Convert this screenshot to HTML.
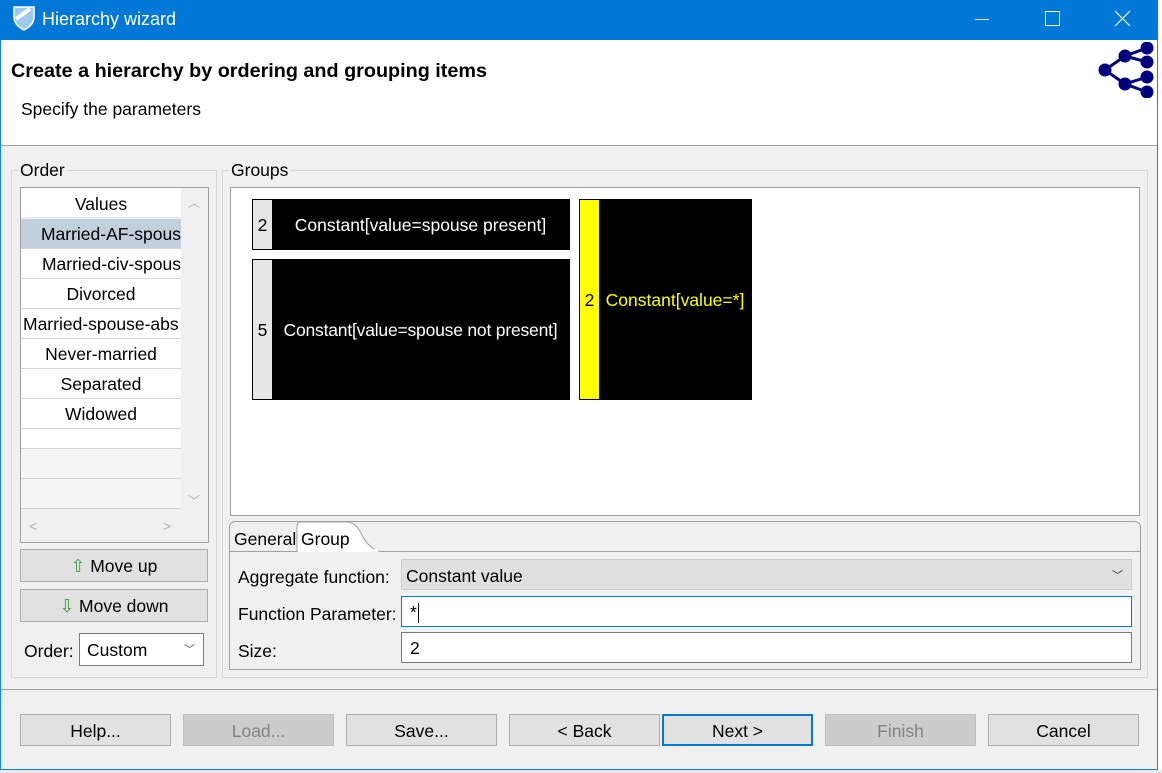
<!DOCTYPE html>
<html><head><style>
*{margin:0;padding:0;box-sizing:border-box}
body{width:1162px;height:773px;background:#f0f0f0;font-family:"Liberation Sans","DejaVu Sans",sans-serif;font-size:17.5px;color:#000;position:relative;overflow:hidden}
.a{position:absolute}
.btn{position:absolute;top:714px;width:151px;height:32px;background:#e1e1e1;border:1px solid #adadad;text-align:center;line-height:32px;font-size:17.5px}
.dis{background:#cccccc;border-color:#bfbfbf;color:#838383}
.row{position:absolute;left:21px;width:160px;height:30px;border-bottom:1px solid #d5d5d5;text-align:center;line-height:31px;background:#fff;white-space:nowrap;overflow:hidden;font-size:17.5px}
.inp{position:absolute;left:401px;width:731px;height:31px;background:#fff;border:1px solid #7a7a7a;line-height:31px;padding-left:8px;font-size:17.5px}
</style></head><body>
<div class="a" style="left:1158px;top:0;width:4px;height:773px;background:#fff"></div>
<div class="a" style="left:0;top:770px;width:1162px;height:3px;background:#e8e8e8"></div>
<div class="a" style="left:0;top:0;width:1158px;height:770px;border:1px solid #1883d7;border-top:none"></div>
<div class="a" style="left:0;top:0;width:1158px;height:40px;background:#0078d7"></div>
<svg class="a" style="left:12px;top:5px" width="24" height="26" viewBox="0 0 24 26"><path d="M2 2 L22 2 L22 12 C22 19 16 23 12 25 C8 23 2 19 2 12 Z" fill="#9ec9ee" stroke="#fff" stroke-width="1.5"/><path d="M4 14 L18 4" stroke="#fff" stroke-width="4"/></svg>
<div class="a" style="left:42px;top:9px;color:#fff;font-size:18px">Hierarchy wizard</div>
<div class="a" style="left:975px;top:19px;width:14px;height:1px;background:#cfe4f7"></div>
<div class="a" style="left:1045px;top:11px;width:15px;height:15px;border:1px solid #fff"></div>
<svg class="a" style="left:1114px;top:10px" width="17" height="17"><path d="M1 1L16 16M16 1L1 16" stroke="#fff" stroke-width="1.2"/></svg>
<div class="a" style="left:1px;top:40px;width:1156px;height:106px;background:#fff;border-bottom:1px solid #a0a0a0"></div>
<div class="a" style="left:11px;top:60px;font-weight:bold;font-size:19.8px">Create a hierarchy by ordering and grouping items</div>
<div class="a" style="left:21px;top:99px;font-size:17.5px">Specify the parameters</div>
<svg class="a" style="left:1098px;top:42px" width="60" height="56" viewBox="0 0 60 56"><g stroke="#00007f" stroke-width="3" fill="#00007f"><path d="M7 28 L27 14 L49 6 M27 14 L49 20 M7 28 L27 42 L49 35 M27 42 L49 50" fill="none"/><circle cx="7" cy="28" r="5"/><circle cx="27" cy="14" r="5"/><circle cx="27" cy="42" r="5"/><circle cx="49" cy="6" r="5"/><circle cx="49" cy="20" r="5"/><circle cx="49" cy="35" r="5"/><circle cx="49" cy="50" r="5"/></g></svg>
<div class="a" style="left:11px;top:170px;width:206px;height:508px;border:1px solid #d8d8d8"></div>
<div class="a" style="left:18px;top:160px;background:#f0f0f0;padding:0 2px">Order</div>
<div class="a" style="left:20px;top:187px;width:189px;height:356px;border:1px solid #a0a0a0;background:#f0f0f0"></div>
<div class="a" style="left:21px;top:188px;width:160px;height:30px;background:#fff;border-bottom:1px solid #e5e5e5;text-align:center;line-height:33px">Values</div>
<div class="row" style="top:219px;background:#c2cfdc;text-align:right">Married-AF-spous</div>
<div class="row" style="top:249px;text-align:right">Married-civ-spous</div>
<div class="row" style="top:279px">Divorced</div>
<div class="row" style="top:309px;text-align:left;padding-left:2px">Married-spouse-abs</div>
<div class="row" style="top:339px">Never-married</div>
<div class="row" style="top:369px">Separated</div>
<div class="row" style="top:399px">Widowed</div>
<div class="row" style="top:429px;height:20px"></div>
<div class="row" style="top:449px;background:#f4f4f4"></div>
<div class="row" style="top:479px;background:#f4f4f4;height:30px"></div>
<div class="a" style="left:181px;top:188px;width:27px;height:325px;background:#f0f0f0"></div>
<div class="a" style="left:188px;top:194px;color:#b0b0b0;font-size:12px">︿</div>
<div class="a" style="left:188px;top:492px;color:#b0b0b0;font-size:12px">﹀</div>
<div class="a" style="left:29px;top:518px;color:#b0b0b0;font-size:14px">&lt;</div>
<div class="a" style="left:163px;top:518px;color:#b0b0b0;font-size:14px">&gt;</div>
<div class="a" style="left:20px;top:549px;width:188px;height:33px;background:#e1e1e1;border:1px solid #adadad;text-align:center;line-height:33px"><span style="color:#3a9a3a">⇧</span> Move up</div>
<div class="a" style="left:20px;top:589px;width:188px;height:33px;background:#e1e1e1;border:1px solid #adadad;text-align:center;line-height:33px"><span style="color:#3a9a3a">⇩</span> Move down</div>
<div class="a" style="left:24px;top:641px">Order:</div>
<div class="a" style="left:79px;top:633px;width:125px;height:33px;background:#fff;border:1px solid #7a7a7a;line-height:33px;padding-left:7px">Custom<span style="position:absolute;right:8px;top:0;color:#555;font-size:11px">﹀</span></div>
<div class="a" style="left:222px;top:170px;width:926px;height:508px;border:1px solid #d8d8d8"></div>
<div class="a" style="left:229px;top:160px;background:#f0f0f0;padding:0 2px">Groups</div>
<div class="a" style="left:230px;top:187px;width:910px;height:329px;background:#fff;border:1px solid #a0a0a0"></div>
<div class="a" style="left:252px;top:199px;width:318px;height:51px;background:#000;border:1px solid #000"></div>
<div class="a" style="left:253px;top:200px;width:19px;height:49px;background:#e6e6e6;line-height:51px;text-align:center">2</div>
<div class="a" style="left:272px;top:200px;width:297px;height:49px;color:#fff;line-height:51px;text-align:center">Constant[value=spouse present]</div>
<div class="a" style="left:252px;top:259px;width:318px;height:141px;background:#000"></div>
<div class="a" style="left:253px;top:260px;width:19px;height:139px;background:#e6e6e6;line-height:141px;text-align:center">5</div>
<div class="a" style="left:272px;top:260px;width:297px;height:139px;color:#fff;line-height:141px;text-align:center;white-space:nowrap;letter-spacing:-0.2px">Constant[value=spouse not present]</div>
<div class="a" style="left:579px;top:199px;width:173px;height:201px;background:#000"></div>
<div class="a" style="left:580px;top:200px;width:19px;height:199px;background:#ffff00;line-height:201px;text-align:center">2</div>
<div class="a" style="left:599px;top:200px;width:152px;height:199px;color:#ffff00;line-height:201px;text-align:center">Constant[value=*]</div>
<div class="a" style="left:229px;top:521px;width:912px;height:149px;border:1px solid #a0a0a0;border-radius:6px 6px 0 0;background:#f0f0f0"></div>
<div class="a" style="left:230px;top:551px;width:910px;height:1px;background:#a0a0a0"></div>
<div class="a" style="left:234px;top:529px">General</div>
<svg class="a" style="left:296px;top:521px" width="90" height="32"><path d="M1 31 L1 5 Q1 1 5 1 L50 1 Q60 1 66 14 Q74 30 88 31" fill="#fff" stroke="#a0a0a0"/><rect x="2" y="28" width="80" height="4" fill="#fff"/></svg>
<div class="a" style="left:301px;top:529px">Group</div>
<div class="a" style="left:230px;top:552px;width:910px;height:117px;background:#f0f0f0"></div>
<div class="a" style="left:238px;top:567px">Aggregate function:</div>
<div class="a" style="left:401px;top:559px;width:731px;height:31px;background:#e0e0e0;border:1px solid #cccccc;line-height:32px;padding-left:4px">Constant value<span style="position:absolute;right:8px;top:0;color:#333;font-size:11px">﹀</span></div>
<div class="a" style="left:238px;top:604px">Function Parameter:</div>
<div class="inp" style="top:596px;border-color:#0078d7">*<span style="display:inline-block;width:1px;height:20px;background:#000;vertical-align:middle;margin-left:1px"></span></div>
<div class="a" style="left:238px;top:641px">Size:</div>
<div class="inp" style="top:632px">2</div>
<div class="a" style="left:1px;top:689px;width:1156px;height:1px;background:#a0a0a0"></div>
<div class="btn" style="left:20px">Help...</div>
<div class="btn dis" style="left:183px">Load...</div>
<div class="btn" style="left:346px">Save...</div>
<div class="btn" style="left:509px">&lt; Back</div>
<div class="btn" style="left:662px;border:2px solid #0078d7;line-height:30px">Next &gt;</div>
<div class="btn dis" style="left:825px">Finish</div>
<div class="btn" style="left:988px">Cancel</div>
</body></html>
